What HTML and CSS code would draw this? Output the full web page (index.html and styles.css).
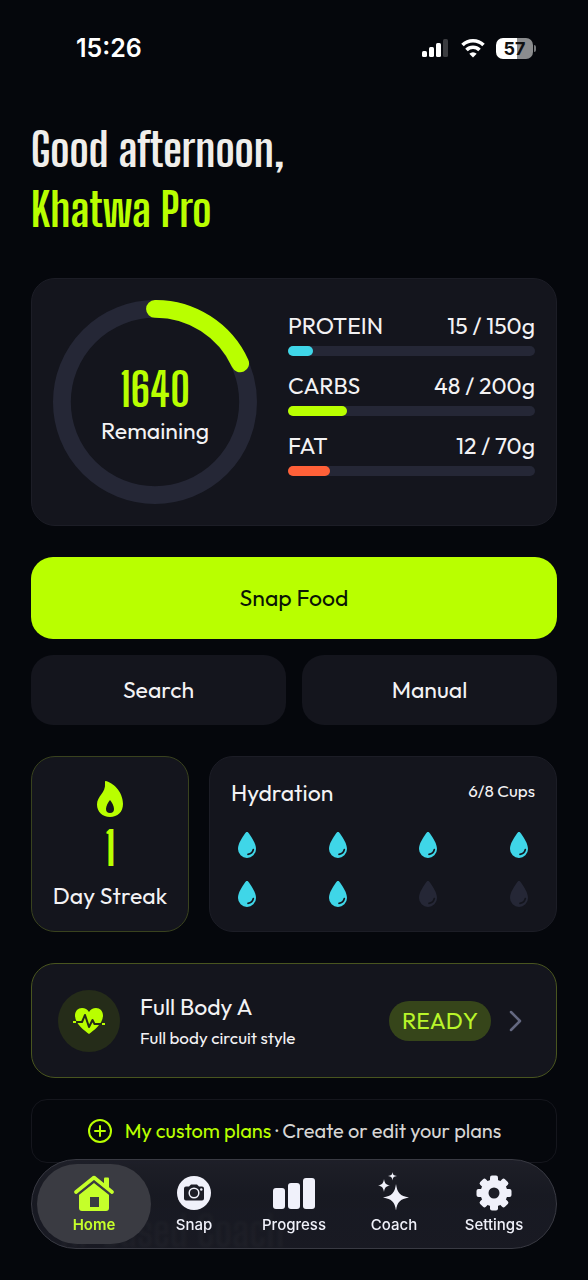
FILE: index.html
```html
<!DOCTYPE html>
<html lang="en">
<head>
<meta charset="utf-8">
<meta name="viewport" content="width=device-width, initial-scale=1">
<title>Khatwa Pro</title>
<link rel="stylesheet" href="styles.css">
</head>
<body>
<svg class="defs" aria-hidden="true">
  <symbol id="drop" viewBox="0 0 20 28">
    <path fill="currentColor" d="M10 1C9 1 8.600 1.600 8 2.500 5 7 1 12.500 1 18a9 9 0 0 0 18 0c0-5.500-4-11-7-15.500C11.400 1.600 11 1 10 1Z"/>
    <path d="M11 23.300c2.500-.3 4.700-2 5.300-4.700" fill="none" stroke="#14151d" stroke-width="1.700" stroke-linecap="round"/>
  </symbol>
</svg>

<header class="status">
  <time class="clock">15:26</time>
  <div class="indicators">
    <svg width="29" height="20" viewBox="0 0 29 20" aria-label="Signal">
      <g fill="#fff"><rect x="1" y="13" width="5" height="6" rx="1.500"/><rect x="8" y="9" width="5" height="10" rx="1.500"/><rect x="15" y="5" width="5" height="14" rx="1.500"/></g>
      <rect x="22" y="1" width="5" height="18" rx="1.500" fill="#3b3c40"/>
    </svg>
    <svg width="24" height="20" viewBox="0 0 24 20" aria-label="Wi-Fi">
      <g fill="none" stroke="#fff" stroke-width="3.600"><path d="M1.500 7a15 15 0 0 1 21 0"/><path d="M5.500 12a9.200 9.200 0 0 1 13 0"/></g>
      <path fill="#fff" d="M12 19.500l-3.700-3.800a5.300 5.300 0 0 1 7.400 0Z"/>
    </svg>
    <div class="battery"><span class="battery-level">57</span><span class="battery-cap"></span></div>
  </div>
</header>

<main class="page">
  <h1 class="greeting">Good afternoon,<br><span class="accent">Khatwa Pro</span></h1>

  <section class="card summary">
    <div class="ring">
      <svg class="ring-art" viewBox="0 0 206 206" aria-hidden="true">
        <circle cx="103" cy="103" r="94" fill="none" stroke="#252736" stroke-width="18"/>
        <path d="M103 9A94 94 0 0 1 189 64" fill="none" stroke="#b9ff00" stroke-width="18" stroke-linecap="round"/>
      </svg>
      <div class="ring-label"><strong class="figure">1640</strong><span>Remaining</span></div>
    </div>
    <div class="macros">
      <div class="macro"><span>PROTEIN</span><span>15 / 150g</span><div class="track"><div class="fill protein" style="width:10%"></div></div></div>
      <div class="macro"><span>CARBS</span><span>48 / 200g</span><div class="track"><div class="fill carbs" style="width:24%"></div></div></div>
      <div class="macro"><span>FAT</span><span>12 / 70g</span><div class="track"><div class="fill fat" style="width:17%"></div></div></div>
    </div>
  </section>

  <div class="actions">
    <button class="btn primary" type="button">Snap Food</button>
    <button class="btn" type="button">Search</button>
    <button class="btn" type="button">Manual</button>
  </div>

  <div class="stats">
    <section class="card streak">
      <svg width="28" height="38" viewBox="0 0 28 38" aria-hidden="true">
        <path fill="#b9ff00" fill-rule="evenodd" d="M9.500 1C16 2 27 11 27 24c0 8-5.500 13-13 13S1 32 1 24.500C1 16 10 13 9 3c0-1-.2-2 .5-2ZM14 20c-2 2.500-4 6-4 9a4 4 0 0 0 8 0c0-3-2-6.500-4-9Z"/>
      </svg>
      <strong class="figure">1</strong>
      <span>Day Streak</span>
    </section>
    <section class="card hydration">
      <div class="hydration-head"><h2 class="title">Hydration</h2><span class="small">6/8 Cups</span></div>
      <div class="cups">
        <svg class="cup"><use href="#drop"/></svg><svg class="cup"><use href="#drop"/></svg><svg class="cup"><use href="#drop"/></svg><svg class="cup"><use href="#drop"/></svg>
        <svg class="cup"><use href="#drop"/></svg><svg class="cup"><use href="#drop"/></svg><svg class="cup empty"><use href="#drop"/></svg><svg class="cup empty"><use href="#drop"/></svg>
      </div>
    </section>
  </div>

  <a class="card workout" href="#workout">
    <span class="badge">
      <svg width="32" height="28" viewBox="0 0 32 28" aria-hidden="true">
        <path fill="#b9ff00" d="M16 27C12 24 2 17 2 8.500 2 4 5 1 9 1c3 0 5.500 1.500 7 4 1.500-2.500 4-4 7-4 4 0 7 3 7 7.500C30 17 20 24 16 27Z"/>
        <path d="M0 15h9l3-7 4 12 3.500-7 2 4H32" fill="none" stroke="#252c19" stroke-width="2" stroke-linejoin="round"/>
        <path d="M0 15h3M29 17h3" stroke="#b9ff00" stroke-width="2"/>
      </svg>
    </span>
    <span class="workout-text"><span class="title">Full Body A</span><span class="small">Full body circuit style</span></span>
    <span class="pill">READY</span>
    <svg width="14" height="22" viewBox="0 0 14 22" aria-hidden="true"><path d="M3 2l9 9-9 9" fill="none" stroke="#646880" stroke-width="2.500" stroke-linecap="round" stroke-linejoin="round"/></svg>
  </a>

  <a class="plans" href="#plans">
    <svg width="26" height="26" viewBox="0 0 26 26" aria-hidden="true"><g fill="none" stroke="#b9ff00" stroke-width="2" stroke-linecap="round"><circle cx="13" cy="13" r="11"/><path d="M8 13h10M13 8v10"/></g></svg>
    <span><span class="accent">My custom plans</span> · Create or edit your plans</span>
  </a>

  <section class="coach"><h2 class="coach-title">AI-Based Coach</h2></section>
</main>

<nav class="tabs">
  <a class="tab active" href="#home">
    <svg width="40" height="36" viewBox="0 0 40 36" aria-hidden="true">
      <path fill="currentColor" d="M30 3.500a1 1 0 0 1 1-1h3a1 1 0 0 1 1 1V14l-5-4Z"/>
      <path fill="currentColor" fill-rule="evenodd" d="M5 19L20 7.500 35 19v14a3 3 0 0 1-3 3H8a3 3 0 0 1-3-3ZM16 22v10h9V22Z"/>
      <path d="M3 19.500L20 6l17 13.500" fill="none" stroke="#3a3b42" stroke-width="3"/>
      <path d="M2 17L20 2.500 38 17" fill="none" stroke="currentColor" stroke-width="3.600" stroke-linecap="round" stroke-linejoin="round"/>
    </svg>Home</a>
  <a class="tab" href="#snap">
    <svg width="36" height="36" viewBox="0 0 36 36" aria-hidden="true">
      <circle cx="18" cy="18" r="17" fill="currentColor"/>
      <path fill="#1c1d26" d="M10 11.500h3l2-2h6l2 2h3a2 2 0 0 1 2 2v10a2 2 0 0 1-2 2H10a2 2 0 0 1-2-2v-10a2 2 0 0 1 2-2Z"/>
      <circle cx="18" cy="18" r="4.800" fill="none" stroke="currentColor" stroke-width="1.500"/><circle cx="25.300" cy="14.500" r="1.200" fill="currentColor"/>
    </svg>Snap</a>
  <a class="tab" href="#progress">
    <svg width="44" height="36" viewBox="0 0 44 36" aria-hidden="true"><g fill="currentColor"><rect x="1" y="13" width="12" height="21" rx="3"/><rect x="16" y="8" width="12" height="26" rx="3"/><rect x="31" y="3" width="12" height="31" rx="3"/></g></svg>Progress</a>
  <a class="tab" href="#coach">
    <svg width="34" height="40" viewBox="0 0 34 40" aria-hidden="true"><path fill="currentColor" d="M19 13c1.300 9 4 12 13 13.500-9 1.500-11.700 4.500-13 13-1.300-8.500-4-11.500-13-13C15 25 17.700 22 19 13ZM7 8c.7 4.500 2 5.800 6 6.500-4 .7-5.300 2-6 6.500-.7-4.500-2-5.800-6-6.500 4-.7 5.300-2 6-6.500ZM15.500 1c.4 2.800 1.300 3.600 4.500 4-3.200.5-4.100 1.300-4.500 4.500-.4-3.200-1.300-4-4.500-4.500 3.200-.4 4.100-1.200 4.500-4Z"/></svg>Coach</a>
  <a class="tab" href="#settings">
    <svg width="36" height="36" viewBox="-18 -18 36 36" aria-hidden="true">
      <g fill="currentColor"><rect x="-4" y="-17.500" width="8" height="35" rx="2"/><rect x="-4" y="-17.500" width="8" height="35" rx="2" transform="rotate(45)"/><rect x="-4" y="-17.500" width="8" height="35" rx="2" transform="rotate(90)"/><rect x="-4" y="-17.500" width="8" height="35" rx="2" transform="rotate(135)"/><circle r="13.500"/></g>
      <circle r="5.500" fill="#1c1d26"/>
    </svg>Settings</a>
</nav>
</body>
</html>
```

FILE: styles.css
```css
:root {
  --lime: #b9ff00;
  --card: #14151d;
  --edge: #1c1d26;
  --track: #252736;
  --text: #f3f2f4;
  --display: "Big Shoulders Display", "Roboto Condensed", "Liberation Sans Narrow", "Liberation Sans", sans-serif;
}
* { box-sizing: border-box; }
body {
  margin: 0;
  min-height: 100vh;
  background: #05070c;
  color: var(--text);
  font: 23px/30px Outfit, Lato, sans-serif;
}
a { color: inherit; text-decoration: none; }
h1, h2 { margin: 0; font-weight: 400; }
.defs { display: none; }

.status {
  display: flex;
  justify-content: space-between;
  align-items: center;
  padding: 32px 52px 0 76px;
}
.clock { font: 600 25px/32px Inter, sans-serif; color: #fff; }
.indicators { display: flex; align-items: center; gap: 11px; }
.battery { display: flex; align-items: center; gap: 1px; }
.battery-level {
  width: 37px;
  border-radius: 7px;
  background: linear-gradient(90deg, #fff 57%, #8b8c8e 57%);
  color: #111;
  font: 700 18px/21px Inter, sans-serif;
  text-align: center;
}
.battery-cap { width: 2px; height: 7px; border-radius: 0 2px 2px 0; background: #77787b; }

.page { padding: 56px 31px 0; }
.greeting { font: 700 46px/60px var(--display); color: #f0eeeb; margin-bottom: 38px; }
.accent { color: var(--lime); }
.figure { font: 700 45px/48px var(--display); color: var(--lime); }
.title { font-size: 23px; line-height: 30px; }
.small { font-size: 17px; line-height: 26px; }

.card { background: var(--card); border: 1px solid var(--edge); border-radius: 24px; }
.summary {
  display: grid;
  grid-template-columns: 204px 1fr;
  align-items: center;
  gap: 31px;
  padding: 21px;
}
.ring { display: grid; }
.ring-art, .ring-label { grid-area: 1 / 1; }
.ring-label { display: flex; flex-direction: column; align-items: center; justify-content: center; gap: 2px; padding-top: 8px; }
.macros { display: grid; gap: 15px; padding-bottom: 17px; }
.macro { display: grid; grid-template-columns: 1fr auto; row-gap: 5px; }
.track { grid-column: 1 / -1; height: 10px; border-radius: 5px; background: var(--track); }
.fill { height: 100%; border-radius: 5px; }
.protein { background: #3fd6e8; }
.carbs { background: var(--lime); }
.fat { background: #ff6038; }

.actions { display: grid; grid-template-columns: 1fr 1fr; gap: 16px; margin: 31px 0; }
.btn {
  height: 70px;
  border: 0;
  border-radius: 22px;
  background: var(--card);
  color: var(--text);
  font: inherit;
}
.primary { grid-column: 1 / -1; height: 82px; background: var(--lime); color: #0b1505; }

.stats { display: grid; grid-template-columns: 158px 1fr; gap: 20px; margin-bottom: 31px; }
.streak {
  display: flex;
  flex-direction: column;
  align-items: center;
  padding: 23px 8px 20px;
  border-color: #39421e;
}
.streak .figure { line-height: 63px; }
.hydration { padding: 21px 21px 20px; }
.hydration-head { display: flex; justify-content: space-between; }
.cups { display: grid; grid-template-columns: repeat(4, 32px); justify-content: space-between; row-gap: 21px; margin-top: 23px; }
.cup { width: 32px; height: 28px; color: #3fd6e8; }
.empty { color: var(--track); }

.workout {
  display: flex;
  align-items: center;
  padding: 26px 34px 25px 26px;
  margin-bottom: 21px;
  border-color: #49551f;
}
.badge { display: grid; place-items: center; width: 62px; height: 62px; border-radius: 50%; background: #252c19; }
.workout-text { display: grid; gap: 3px; flex: 1; padding-left: 20px; }
.pill { padding: 5px 13px; margin-right: 17px; border-radius: 20px; background: #36451a; color: #b9f52a; }

.plans {
  display: flex;
  align-items: center;
  justify-content: center;
  gap: 12px;
  padding: 16px;
  border: 1px solid #15161d;
  border-radius: 16px;
  color: #d6d5d4;
  font-size: 20px;
}

.coach { padding: 38px 30px 0; }
.coach-title { font: 700 42px/60px var(--display); color: #2c2d30; }

.tabs {
  position: fixed;
  left: 31px;
  right: 31px;
  bottom: 31px;
  display: grid;
  grid-template-columns: repeat(5, 1fr);
  padding: 4px 12px;
  border: 1px solid #393a43;
  border-radius: 45px;
  background: linear-gradient(#20212aee, #191b24ee 40%, #1c1d26e0);
  backdrop-filter: blur(1px);
}
.tab {
  display: flex;
  flex-direction: column;
  align-items: center;
  justify-content: flex-end;
  height: 80px;
  padding-bottom: 9px;
  border-radius: 40px;
  color: #f0f1fa;
  font: 500 15px/20px Inter, sans-serif;
}
.tab svg { margin-bottom: 4px; }
.active { margin: 0 -7px; background: #3a3b42; color: #c5ff2a; font-weight: 600; }
```
